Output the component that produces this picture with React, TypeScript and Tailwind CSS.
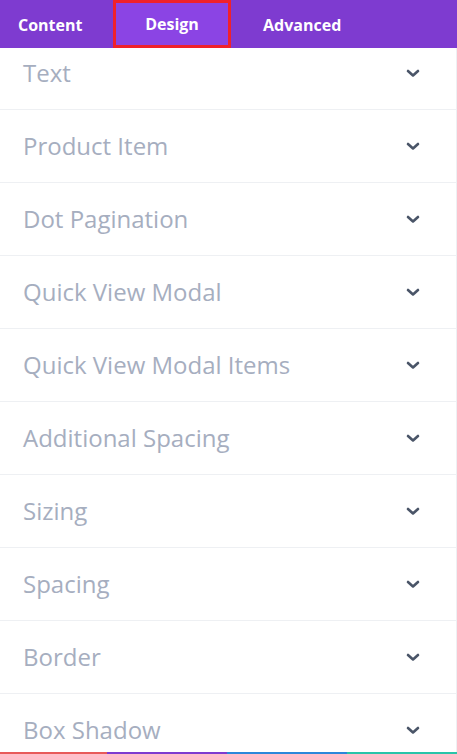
import React from "react";

const sections = [
  "Text",
  "Product Item",
  "Dot Pagination",
  "Quick View Modal",
  "Quick View Modal Items",
  "Additional Spacing",
  "Sizing",
  "Spacing",
  "Border",
  "Box Shadow",
];

const Chevron = () => (
  <svg width="14" height="9" viewBox="0 0 14 9" fill="none">
    <path d="M2 2l5 4.5L12 2" stroke="#4a5568" strokeWidth="2.6" strokeLinecap="round" strokeLinejoin="round" />
  </svg>
);

export default function App() {
  return (
    <div
      className="relative w-[457px] h-[754px] overflow-hidden bg-white flex flex-col"
      style={{ fontFamily: '"Open Sans", sans-serif' }}
    >
      {/* Tabs */}
      <div className="h-[48px] shrink-0 bg-[#7e3bd0] flex items-stretch pt-[1px] z-10">
        <div className="w-[113px] flex items-center pl-[18px] text-white font-bold text-[16px]">Content</div>
        <div className="w-[118px] -mt-[1px] flex items-center justify-center bg-[#8b44e4] border-[3px] border-[#f0212b] text-white font-bold text-[16px]">
          Design
        </div>
        <div className="flex items-center pl-[32px] text-white font-bold text-[16px]">Advanced</div>
      </div>

      {/* Accordion list */}
      <div className="flex-1 overflow-hidden border-r border-[#eef0f3]">
        <div className="-mt-[11px]">
          {sections.map((s) => (
            <div
              key={s}
              className="h-[73px] flex items-center justify-between pl-[23px] pr-[36px] border-b border-[#eef0f3]"
            >
              <span className="text-[24px] text-[#a6aebf]">{s}</span>
              <Chevron />
            </div>
          ))}
        </div>
      </div>

      {/* Color strip */}
      <div className="h-[2px] shrink-0 flex">
        <div className="w-[107px] bg-[#e85a5a]" />
        <div className="w-[120px] bg-[#7e3bd0]" />
        <div className="w-[120px] bg-[#2b87da]" />
        <div className="flex-1 bg-[#29c4a9]" />
      </div>
    </div>
  );
}
